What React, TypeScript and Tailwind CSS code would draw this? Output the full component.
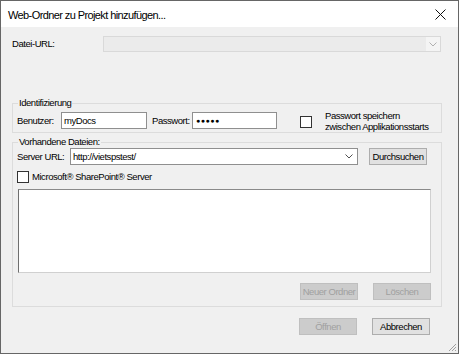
import React from 'react';

const font = { fontFamily: '"Liberation Sans", Arial, sans-serif' };

function Chevron({ color = '#505050' }: { color?: string }) {
  return (
    <svg width="8" height="5" viewBox="0 0 8 5" fill="none">
      <path d="M0.5 0.5 L4 4 L7.5 0.5" stroke={color} strokeWidth="1" />
    </svg>
  );
}

function Checkbox() {
  return <div className="w-[12px] h-[12px] border border-[#333333] bg-white shrink-0" />;
}

function Button({ label, disabled }: { label: string; disabled?: boolean }) {
  return (
    <div
      className={
        disabled
          ? 'w-[58px] h-[17px] shrink-0 whitespace-nowrap flex items-center justify-center bg-[#cccccc] border border-[#bfbfbf] text-[#a0a0a0]'
          : 'w-[58px] h-[17px] shrink-0 whitespace-nowrap flex items-center justify-center bg-[#e1e1e1] border border-[#adadad] text-black'
      }
    >
      {label}
    </div>
  );
}

export default function App() {
  return (
    <div
      className="w-[459px] h-[354px] border border-[#666666] bg-[#f0f0f0] flex flex-col relative text-[9.5px] leading-[12px] tracking-[-0.45px] text-black overflow-hidden"
      style={font}
    >
      {/* title bar */}
      <div className="h-[26px] bg-white flex items-center justify-between pl-[7px] pr-[12px] shrink-0">
        <span className="text-[11px] tracking-[-0.6px] mt-[1px] whitespace-nowrap">Web-Ordner zu Projekt hinzufügen...</span>
        <svg width="11" height="11" viewBox="0 0 11 11">
          <path d="M0.5 0.5 L10.5 10.5 M10.5 0.5 L0.5 10.5" stroke="#111" strokeWidth="1" />
        </svg>
      </div>

      <div className="flex flex-col px-[11px]">
        {/* Datei-URL */}
        <div className="flex items-center mt-[9px]">
          <span className="w-[91px] shrink-0 whitespace-nowrap">Datei-URL:</span>
          <div className="w-[338px] h-[16px] border border-[#d9d9d9] bg-[#ebebeb] flex items-center justify-end">
            <div className="w-[14px] h-full bg-[#f4f4f4] flex items-center justify-center">
              <Chevron color="#b0b0b0" />
            </div>
          </div>
        </div>

        {/* Identifizierung */}
        <fieldset className="mt-[45px] w-[430px] border border-[#dcdcdc] px-[4px] pb-[3px]">
          <legend className="px-[1px] ml-[1px]">Identifizierung</legend>
          <div className="flex items-start h-[17px] mt-[3px] whitespace-nowrap">
            <span className="w-[44px] shrink-0 mt-[3px]">Benutzer:</span>
            <div className="w-[86px] h-[17px] shrink-0 bg-white border border-[#8f8f8f] flex items-center pl-[2px]">myDocs</div>
            <span className="w-[40px] shrink-0 ml-[5px] mt-[3px]">Passwort:</span>
            <div className="w-[85px] h-[17px] shrink-0 bg-white border border-[#8f8f8f] flex items-center pl-[3px] text-[7px] tracking-[0.5px]">
              ●●●●●
            </div>
            <div className="ml-[23px] mt-[4px]">
              <Checkbox />
            </div>
            <div className="ml-[13px] -mt-[2px] flex flex-col leading-[11px]">
              <span>Passwort speichern</span>
              <span>zwischen Applikationsstarts</span>
            </div>
          </div>
        </fieldset>

        {/* Vorhandene Dateien */}
        <fieldset className="mt-[3px] w-[430px] border border-[#dcdcdc] px-[4px] pb-[6px]">
          <legend className="px-[1px] ml-[1px]">Vorhandene Dateien:</legend>
          <div className="flex items-center whitespace-nowrap">
            <span className="w-[53px] shrink-0">Server URL:</span>
            <div className="w-[288px] h-[17px] shrink-0 bg-white border border-[#8f8f8f] flex items-center justify-between pl-[2px] pr-[4px]">
              <span>http://vietspstest/</span>
              <Chevron />
            </div>
            <div className="ml-[11px]">
              <Button label="Durchsuchen" />
            </div>
          </div>
          <div className="flex items-center mt-[6px] whitespace-nowrap">
            <Checkbox />
            <span className="ml-[3px]">Microsoft® SharePoint® Server</span>
          </div>
          <div className="mt-[6px] ml-[1px] w-[413px] h-[84px] bg-white border border-[#d0d0d0] border-l-[#6f6f6f] border-t-[#8a8a8a]" />
          <div className="flex justify-end gap-[15px] mt-[10px] pr-[6px]">
            <Button label="Neuer Ordner" disabled />
            <Button label="Löschen" disabled />
          </div>
        </fieldset>

        <div className="flex justify-end gap-[15px] mt-[11px] pr-[17px]">
          <Button label="Öffnen" disabled />
          <Button label="Abbrechen" />
        </div>
      </div>

      <svg className="absolute right-[1px] bottom-[1px]" width="9" height="9" viewBox="0 0 9 9">
        <path d="M8 1 L1 8 M8 4 L4 8 M8 7 L7 8" stroke="#a0a0a0" strokeWidth="1" />
      </svg>
    </div>
  );
}
